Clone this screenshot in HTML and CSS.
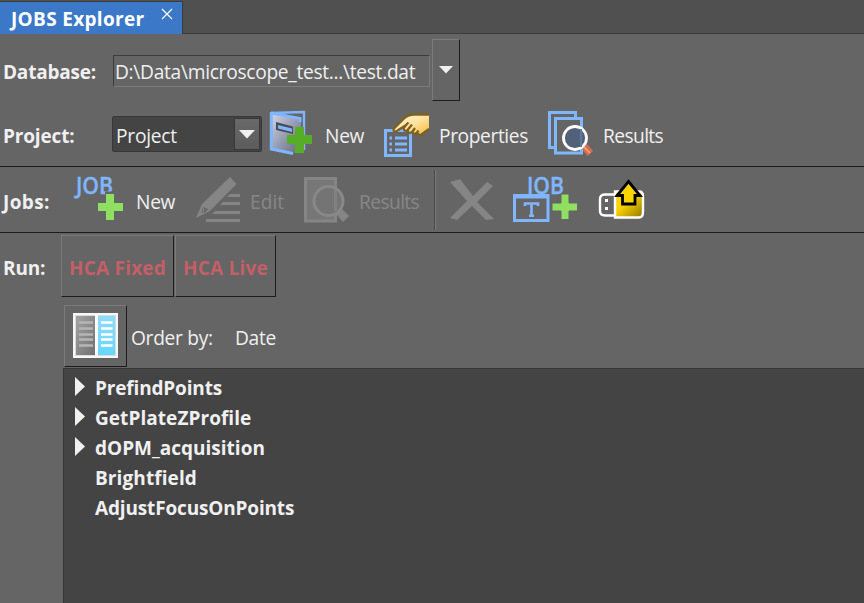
FILE: index.html
```html
<!DOCTYPE html>
<html lang="en">
<head>
<meta charset="utf-8">
<title>JOBS Explorer</title>
<link rel="stylesheet" href="styles.css">
</head>
<body>
<main class="panel">
  <header class="tabs">
    <div class="tab"><span class="b t-title">JOBS Explorer</span>
      <svg class="close" width="12" height="12" viewBox="0 0 12 12"><path d="M1 1L11 11M11 1L1 11" stroke="#fff" stroke-width="1.2"/></svg>
    </div>
    <div class="tab-rest"></div>
  </header>

  <section class="row database">
    <span class="label b t-db">Database:</span>
    <div class="path"><span class="t-path">D:\Data\microscope_test...\test.dat</span></div>
    <button class="raised drop"><svg width="14" height="8" viewBox="0 0 14 8"><path d="M0 0H14L7 7.5Z" fill="#f0f0f0"/></svg></button>
  </section>

  <section class="row project">
    <span class="label b t-proj">Project:</span>
    <div class="select"><span class="t-projv">Project</span><span class="arrow"><svg width="16" height="9" viewBox="0 0 16 9"><path d="M0 0H16L8 8.5Z" fill="#f0f0f0"/></svg></span></div>
    <svg class="i-newproject" width="44" height="46" viewBox="0 0 44 46">
      <defs><linearGradient id="door" x1="0" y1="0" x2="1" y2="1"><stop offset="0" stop-color="#d4d8e8"/><stop offset=".5" stop-color="#989eb4"/><stop offset="1" stop-color="#62687a"/></linearGradient></defs>
      <path d="M1 3L34 2V40" fill="none" stroke="#80b5ff" stroke-width="2.4"/>
      <path d="M1 3L23 7.5L31 9V42L23 43L1 38Z" fill="url(#door)"/>
      <path d="M1 3L30 8.5V12M1.3 2V39L23 43.5" fill="none" stroke="#80b5ff" stroke-width="3"/>
      <path d="M6 12L23 16.5V24L6 20Z" fill="#4d4d55"/><path d="M8 15L22 18.5V22L8 18.5Z" fill="#80b5ff"/>
      <path d="M25 17H34V25H42V34H34V43H25V34H17V25H25Z" fill="#58ad28"/>
    </svg>
    <span class="t-pnew">New</span>
    <svg class="i-properties" width="46" height="44" viewBox="0 0 46 44">
      <defs><linearGradient id="hand" x1="0" y1="0" x2="1" y2="1"><stop offset="0" stop-color="#fff6d6"/><stop offset=".5" stop-color="#fee3a0"/><stop offset="1" stop-color="#f5b93d"/></linearGradient></defs>
      <path d="M1.5 17.5H26.500V42.500H1.500Z" fill="none" stroke="#80b5ff" stroke-width="3"/>
      <path d="M5.500 25H8M5.500 31H8M5.500 37H8M11 25H23M11 31H23M11 37H23" stroke="#80b5ff" stroke-width="3"/>
      <path d="M45 1.500L30 1.500C26 1.500 23 2.500 20 5.500L10 15.500C8.500 18.500 11.500 19.500 13.500 17.500L21.500 12.500L19.500 15.500C20 18.500 22.500 18.500 24 16.500C23.500 20 26 21 28.500 18.500C28.500 21 31 21.500 33 20L36 22.500L45 16Z" fill="url(#hand)"/>
      <path d="M45 1.500L30 1.500C26 1.500 23 2.500 20 5.500L10 15.500C8.500 18.500 11.500 19.500 13.500 17.500L21.500 12.500L24.500 9.500M21.500 12.500L19.500 15.500C20 18.500 22.500 18.500 24 16.500L28 11.500M24 16.500C23.500 20 26 21 28.500 18.500L31 15M28.500 18.500C28.500 21 31 21.500 33 19.500L34.500 17.500M33 20L36 22.500L45 16" fill="none" stroke="#7d6122" stroke-width="2.300" stroke-linejoin="round"/>
    </svg>
    <span class="t-props">Properties</span>
    <svg class="i-results" width="46" height="46" viewBox="0 0 46 46">
      <path d="M6 36.500H1.500V1.500H27.500V6" fill="none" stroke="#80b5ff" stroke-width="3"/>
      <path d="M7.500 7.500H33.500V42H7.500Z" fill="#656565" stroke="#80b5ff" stroke-width="3"/>
      <path d="M34 38L39 33L45 40L39.500 45Z" fill="#d96d4b"/><path d="M36 36L42 42" stroke="#f3a387" stroke-width="1.500"/>
      <circle cx="27" cy="27" r="11.500" fill="#526079" stroke="#fff" stroke-width="2.800"/>
      <path d="M33 18V36" stroke="#5d78a5" stroke-width="2"/>
    </svg>
    <span class="t-res">Results</span>
  </section>

  <section class="row jobs">
    <span class="label b t-jobs">Jobs:</span>
    <svg class="i-newjob" width="52" height="44" viewBox="0 0 52 44">
      <text class="job" x="3" y="16.500" textLength="37" lengthAdjust="spacingAndGlyphs">JOB</text>
      <path d="M32 14.500H43V24H51V34H42V43H31V34H23V24H32Z" fill="#656565"/>
      <path d="M33 17H41V26H50V34H41V43H33V34H25V26H33Z" fill="#8fdf60"/>
    </svg>
    <span class="t-jnew">New</span>
    <svg class="i-edit" width="46" height="46" viewBox="0 0 46 46">
      <g fill="#858585"><path d="M35 1L41.500 8L15 35L1 42L7 28Z"/><path d="M35 18H45V21H32ZM28 26H45V29H25ZM20 35H45V38H17ZM11 43H45V46H11Z"/></g>
      <path d="M8 31L6.500 37L10 36.500L13 33Z" fill="#656565"/><path d="M9 32L8 37" stroke="#858585" stroke-width="1"/>
    </svg>
    <span class="off t-edit">Edit</span>
    <svg class="i-search" width="46" height="46" viewBox="0 0 46 46">
      <path d="M1.500 1.500H31.500V44H1.500Z" fill="#777" stroke="#858585" stroke-width="3"/>
      <path d="M32 37L37 31L45 39L39 45Z" fill="#858585"/>
      <circle cx="24.500" cy="24" r="14.500" fill="#747474" stroke="#888" stroke-width="3"/><path d="M31.500 13V34" stroke="#808080" stroke-width="3"/>
    </svg>
    <span class="off t-jres">Results</span>
    <span class="divider"></span>
    <svg class="i-delete" width="46" height="43" viewBox="0 0 46 43"><path d="M1 4L11 1L24 18L38 4L44 8L28 24L45 41L37 42L23 28L8 42L1 40L18 23Z" fill="#858585"/></svg>
    <svg class="i-template" width="66" height="46" viewBox="0 0 66 46">
      <text class="job" x="14" y="16.500" textLength="37" lengthAdjust="spacingAndGlyphs">JOB</text>
      <path d="M1.500 18.500H35V43.500H1.500Z" fill="#656565" stroke="#80b5ff" stroke-width="3"/>
      <path d="M1 19.500H36" stroke="#80b5ff" stroke-width="4"/>
      <path d="M12 29V26.500H25V29M18.500 26V39M16 38.700H21" fill="none" stroke="#80b5ff" stroke-width="2.600"/>
      <path d="M48 17H56V26H64.500V34H56V42.500H48V34H39V26H48Z" fill="#8fdf60" stroke="#656565" stroke-width="1"/>
    </svg>
    <svg class="i-export" width="46" height="42" viewBox="0 0 46 42">
      <defs><linearGradient id="gold" x1="0" y1="0" x2="1" y2="1"><stop offset=".4" stop-color="#fbd500"/><stop offset="1" stop-color="#8f7600"/></linearGradient></defs>
      <path d="M15 16.500H6Q1 16.500 1 21V33Q1 37.500 6 37.500H15" fill="none" stroke="#fff" stroke-width="2.400"/>
      <path d="M16 13.500H40Q44 13.500 44 18V34Q44 39.500 40 39.500H16Z" fill="url(#gold)" stroke="#fff" stroke-width="2.400"/>
      <path d="M6 21H9V24H6ZM6 29H9V32H6Z" fill="#fff"/>
      <path d="M29.500 3.500L41 17.500H36V26H23.500V17.500H18Z" fill="#fbd500" stroke="#000" stroke-width="2.800"/>
    </svg>
  </section>

  <section class="row run">
    <span class="label b t-run">Run:</span>
    <button class="raised run-btn fixed b"><span class="t-fixed">HCA Fixed</span></button>
    <button class="raised run-btn live b"><span class="t-live">HCA Live</span></button>
  </section>

  <section class="row order">
    <button class="raised view"><svg width="45" height="45" viewBox="0 0 45 45">
      <defs><linearGradient id="gray" x1="0" y1="0" x2="1" y2="1"><stop stop-color="#a4a4a4"/><stop offset="1" stop-color="#707070"/></linearGradient><linearGradient id="cyan" x1="0" y1="0" x2="0" y2="1"><stop stop-color="#8fdcfb"/><stop offset="1" stop-color="#66d7ff"/></linearGradient></defs>
      <path d="M0 0H45V45H0Z" fill="#f7f7f7"/><path d="M2 2H43V43H2Z" fill="#d8dcdc"/>
      <path d="M3 3H22V42H3Z" fill="url(#gray)"/><path d="M22 2H25V43H22Z" fill="#fff"/><path d="M25 3H42V42H25Z" fill="url(#cyan)"/>
      <path d="M6 9.500H20M6 15.500H20M6 21.500H20M6 26.500H20M6 32.500H20" stroke="#b5b5b5" stroke-width="2.500"/>
      <path d="M28 9.500H39.500M28 15.500H39.500M28 21.500H39.500M28 26.500H39.500M28 32.500H39.500" stroke="#fff" stroke-width="2.500"/>
    </svg></button>
    <span class="t-order">Order by:</span><span class="t-date">Date</span>
  </section>

  <ul class="list b">
    <li><i class="tri"></i><span class="l1">PrefindPoints</span></li>
    <li><i class="tri"></i><span class="l2">GetPlateZProfile</span></li>
    <li><i class="tri"></i><span class="l3">dOPM_acquisition</span></li>
    <li><i></i><span class="l4">Brightfield</span></li>
    <li><i></i><span class="l5">AdjustFocusOnPoints</span></li>
  </ul>
</main>
</body>
</html>
```
FILE: styles.css
```css
* { box-sizing: border-box; }
body { margin: 0; background: #656565; color: #f0f0f0; font: 19.2px/28px "Open Sans", "Noto Sans", sans-serif; letter-spacing: -.3px; }
.panel { width: 864px; height: 603px; display: flex; flex-direction: column; overflow: hidden; }
.b { font-weight: 700; font-size: 19px; letter-spacing: 0; }
span { white-space: nowrap; flex: none; }
svg { display: block; flex: none; overflow: visible; }
button { font: inherit; padding: 0; color: inherit; }
.row { display: flex; flex: none; align-items: flex-start; }
.label { padding-left: 3px; letter-spacing: -.15px; }
.raised { flex: none; background: #656565; border: 1px solid; border-color: #7b7b7b #1c1c1c #1c1c1c #7b7b7b; display: flex; align-items: center; justify-content: center; }

.tabs { height: 34px; flex: none; display: flex; background: #505050; border-top: 1px solid #505050; }
.tab { width: 183px; height: 33px; display: flex; background: #3b78c8; border-top: 1px solid #3c3c3c; border-right: 1px solid #3c3c3c; padding-left: 11px; color: #fff; }
.tab .t-title { width: 150px; padding-top: 3px; letter-spacing: .32px; }
.close { margin-top: 6px; }
.tab-rest { flex: 1; border-bottom: 1px solid #3c3c3c; }

.database { height: 71px; padding-top: 5px; }
.database .label { width: 113px; padding-top: 19px; letter-spacing: -.2px; }
.path { width: 317px; height: 32px; margin: 16px 2px 0 0; padding-left: 1px; border: 1px solid; border-color: #3c3c3c #7b7b7b #7b7b7b #3c3c3c; line-height: 32px; }
.drop { width: 28px; height: 62px; }

.project { height: 62px; border-bottom: 1px solid #1c1c1c; }
.project > span { padding-top: 17px; }
.project .label { width: 112px; }
.select { width: 150px; height: 36px; margin-top: 11px; display: flex; justify-content: space-between; background: #444; border: 1px solid #383838; border-radius: 2px; padding: 1px 1px 1px 3px; }
.select > span:first-child { padding-top: 4px; letter-spacing: -.25px; }
.arrow { width: 26px; display: flex; align-items: center; justify-content: center; background: linear-gradient(#696969, #5c5c5c); border: 1px solid #383838; }
.i-newproject { margin: 5px 0 0 8px; }
.t-pnew { width: 69px; padding-left: 11px; }
.i-properties { margin: 8px 0 0 1px; }
.t-props { width: 118px; padding-left: 9px; letter-spacing: -.4px; }
.i-results { margin-top: 6px; }
.t-res { padding-left: 9px; letter-spacing: -.6px; }

.jobs { height: 66px; border-bottom: 1px solid #1c1c1c; }
.jobs > span:not(.divider) { padding-top: 21px; }
.jobs .label { width: 73px; letter-spacing: .4px; }
.job { font: 600 23px "Open Sans", sans-serif; letter-spacing: 0; fill: #80b5ff; stroke: #80b5ff; stroke-width: .4px; }
.i-newjob { margin-top: 10px; }
.t-jnew { width: 71px; padding-left: 11px; }
.off { color: #878787; }
.i-edit { margin: 9px 1px 0 -1px; }
.t-edit { width: 62px; padding-left: 8px; letter-spacing: 0; }
.i-search { margin-top: 10px; }
.t-jres { width: 84px; padding-left: 9px; letter-spacing: -.6px; }
.divider { width: 2px; height: 60px; margin-top: 3px; border-left: 1px solid #484848; border-right: 1px solid #7b7b7b; }
.i-delete { margin: 11px 0 0 13px; }
.i-template { margin: 10px 0 0 18px; }
.i-export { margin: 11px 0 0 20px; }

.run { height: 72px; padding-top: 2px; }
.run .label { width: 61px; padding-top: 19px; }
.run-btn { height: 62px; color: #c45f67; padding: 3px 0 0 0; }
.fixed { width: 113px; margin-right: 1px; font-weight: 700; font-size: 19px; letter-spacing: .2px; }
.live { width: 101px; font-weight: 700; font-size: 19px; letter-spacing: .2px; }

.order { height: 63px; padding-left: 64px; }
.view { width: 63px; height: 62px; padding-bottom: 2px; }
.order > span { padding-top: 19px; }
.t-order { width: 108px; padding-left: 4px; }

.list { flex: 1; list-style: none; margin: 0 0 0 63px; padding: 5px 0 0 11px; background: #444; border-top: 1px solid #383838; border-left: 1px solid #383838; }
.list li { height: 30px; display: flex; }
.list i { width: 20px; flex: none; }
.tri::before { content: ""; display: block; width: 10px; height: 19px; margin-top: 3px; background: #f0f0f0; clip-path: polygon(0 0, 100% 50%, 0 100%); }
.l1, .l5 { letter-spacing: -.16px; }
.l2 { letter-spacing: .06px; }
.l4 { letter-spacing: .1px; }
```
